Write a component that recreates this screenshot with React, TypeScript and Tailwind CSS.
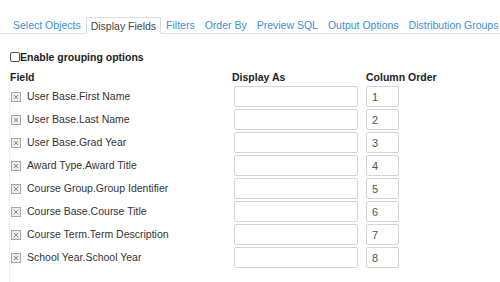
const TABS = [
  "Select Objects",
  "Display Fields",
  "Filters",
  "Order By",
  "Preview SQL",
  "Output Options",
  "Distribution Groups",
];

const FIELDS = [
  "User Base.First Name",
  "User Base.Last Name",
  "User Base.Grad Year",
  "Award Type.Award Title",
  "Course Group.Group Identifier",
  "Course Base.Course Title",
  "Course Term.Term Description",
  "School Year.School Year",
];

function RemoveIcon() {
  return (
    <svg width="10" height="10" viewBox="0 0 10 10" className="shrink-0">
      <rect x="0.5" y="0.5" width="9" height="9" fill="#ececec" stroke="#a8a8a8" />
      <path d="M3 3 L7 7 M7 3 L3 7" stroke="#8a8a8a" strokeWidth="1" />
    </svg>
  );
}

export default function App() {
  return (
    <div
      className="w-[500px] h-[282px] overflow-hidden bg-white flex flex-col text-[10.5px] text-[#333]"
      style={{ fontFamily: '"Liberation Sans", Arial, sans-serif' }}
    >
      {/* Tabs */}
      <div className="flex items-end pt-[17px] pl-[8px] border-b border-[#e2e2e2] whitespace-nowrap">
        {TABS.map((t) =>
          t === "Display Fields" ? (
            <span
              key={t}
              className="px-[4px] h-[17px] leading-[16px] -mb-px bg-white border border-b-white border-[#dcdcdc] text-[#444]"
            >
              {t}
            </span>
          ) : (
            <span key={t} className="px-[5px] h-[16px] leading-[16px] text-[#3b8fd3]">
              {t}
            </span>
          )
        )}
      </div>

      {/* Grouping */}
      <label className="flex items-center pl-[10px] mt-[16px] font-bold text-[#222] leading-[14px]">
        <span className="w-[10px] h-[10px] border border-[#555] rounded-[2px] bg-white" />
        Enable grouping options
      </label>

      {/* Header */}
      <div className="grid grid-cols-[222px_134px_1fr] pl-[10px] mt-[6px] font-bold text-[#222] leading-[14px]">
        <span>Field</span>
        <span>Display As</span>
        <span>Column Order</span>
      </div>

      {/* Rows */}
      <div className="flex-1 ml-[9px] border-l border-[#f0f0f0] pt-[1px]">
        {FIELDS.map((f, i) => (
          <div key={f} className="grid grid-cols-[224px_132px_1fr] items-center h-[23px]">
            <div className="flex items-center gap-[6px] pl-[1px]">
              <RemoveIcon />
              <span>{f}</span>
            </div>
            <input
              className="w-[124px] h-[21px] border border-[#d4d4d4] rounded-[2px] bg-white outline-none"
              defaultValue=""
            />
            <input
              className="w-[33px] h-[21px] border border-[#d4d4d4] rounded-[2px] bg-white px-[5px] text-[#555] text-[11px] outline-none"
              defaultValue={String(i + 1)}
            />
          </div>
        ))}
      </div>
    </div>
  );
}
